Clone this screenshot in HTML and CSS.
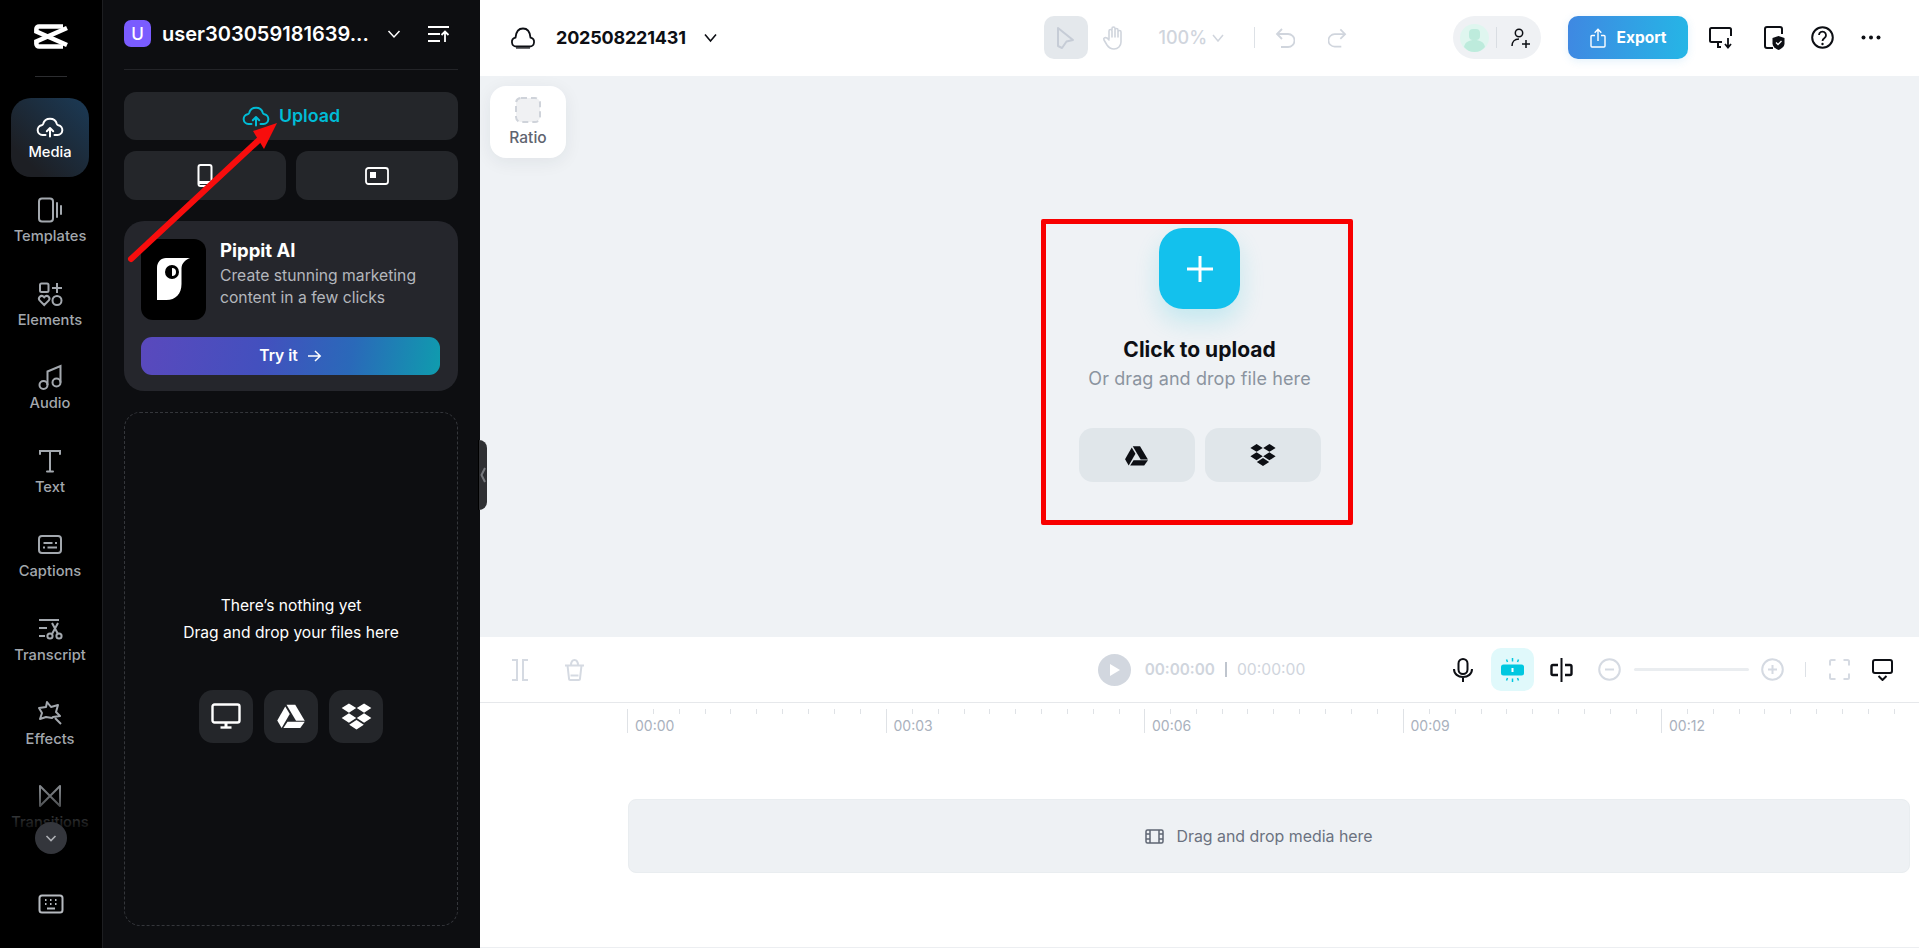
FILE: index.html
```html
<!DOCTYPE html>
<html lang="en">
<head>
    <meta charset="UTF-8">
    <meta name="viewport" content="width=device-width, initial-scale=1.0">
    <title>CapCut editor</title>
    <link rel="stylesheet" href="styles.css">
</head>
<body>

    <svg class="defs" aria-hidden="true">
        <symbol id="drive" viewBox="0 0 24 24">
            <path fill="currentColor" d="M8.4 3h7l7.6 12.8h-7z"/>
            <path fill="currentColor" d="M7.4 4.4 1 15.6l3.5 6L11 10.4z"/>
            <path fill="currentColor" d="M9.2 16.6H23l-3.6 5H5.9z"/>
        </symbol>
        <symbol id="dropbox" viewBox="0 0 24 24">
            <path fill="currentColor" d="M6.500 2.500l5.300 3.400-5.300 3.400-5.300-3.400zM17.500 2.500l5.300 3.400-5.300 3.400-5.300-3.400zM6.500 9.700l5.300 3.400-5.300 3.400-5.300-3.400zM17.500 9.700l5.300 3.400-5.300 3.400-5.300-3.400zM12 14.600l5.300 3.400-5.300 3.500-5.300-3.500z"/>
        </symbol>
        <symbol id="cloud-up" viewBox="0 0 28 24">
            <path fill="none" stroke="currentColor" stroke-width="2" stroke-linecap="round" stroke-linejoin="round" d="M9.500 21H6.400a4.900 4.900 0 0 1-.8-9.700 2 2 0 0 0 1.500-1.300 7.200 7.200 0 0 1 13.800 0 2 2 0 0 0 1.500 1.300 4.900 4.900 0 0 1-.8 9.700h-3.100M14 22.500v-8M10.800 17.200l3.200-3.200 3.200 3.200"/>
        </symbol>
    </svg>

    <div class="app">
        <nav class="rail">
            <div class="rail-logo">
                <svg width="36" height="27" viewBox="0 0 36 27" fill="none" stroke="#fff" stroke-width="4.600">
                    <path d="M30 3.500H6A2.600 2.600 0 0 0 3.400 6v2.500L34 22"/>
                    <path d="M30 23.500H6A2.600 2.600 0 0 1 3.400 21v-2.500L34 5"/>
                </svg>
            </div>
            <div class="rail-items">
                <a class="rail-item active">
                    <svg class="rail-icon" viewBox="0 0 28 24"><use href="#cloud-up"/></svg>
                    <span>Media</span>
                </a>
                <a class="rail-item">
                    <svg class="rail-icon" viewBox="0 0 28 28" fill="none" stroke="currentColor" stroke-width="2"><rect x="3" y="2.500" width="14" height="23" rx="3"/><path d="M21 7v14M25 10v8" stroke-linecap="round"/></svg>
                    <span>Templates</span>
                </a>
                <a class="rail-item">
                    <svg class="rail-icon" viewBox="0 0 28 28" fill="none" stroke="currentColor" stroke-width="2"><rect x="4" y="3.500" width="8.500" height="8.500" rx="1.500"/><path d="M16 8h10M21 3v10"/><path d="M8.200 25 3.600 20.400a2.700 2.700 0 0 1 3.800-3.800l.8.8.8-.8a2.700 2.700 0 0 1 3.800 3.800z"/><circle cx="21" cy="20.500" r="4.500"/></svg>
                    <span>Elements</span>
                </a>
                <a class="rail-item">
                    <svg class="rail-icon" viewBox="0 0 28 28" fill="none" stroke="currentColor" stroke-width="2"><circle cx="7.500" cy="22" r="4"/><circle cx="20.500" cy="19.500" r="4"/><path d="M11.500 22V8.500L24.500 3v16.500"/></svg>
                    <span>Audio</span>
                </a>
                <a class="rail-item">
                    <svg class="rail-icon" viewBox="0 0 28 28" fill="none" stroke="currentColor" stroke-width="2" stroke-linecap="round"><path d="M4 7V4h20v3M14 4v20M11 24.500h6"/></svg>
                    <span>Text</span>
                </a>
                <a class="rail-item">
                    <svg class="rail-icon" viewBox="0 0 28 28" fill="none" stroke="currentColor" stroke-width="2"><rect x="3" y="5" width="22" height="17" rx="3"/><path d="M7.500 12h9M19 12h2M7 16.500h2M11.500 16.500h9.500"/></svg>
                    <span>Captions</span>
                </a>
                <a class="rail-item">
                    <svg class="rail-icon" viewBox="0 0 28 28" fill="none" stroke="currentColor" stroke-width="2"><path d="M3 5h20M3 13h8M3 21h6"/><circle cx="14" cy="21" r="2.600"/><circle cx="23" cy="21" r="2.600"/><path d="M16 8l6 11M22 8l-6 11"/></svg>
                    <span>Transcript</span>
                </a>
                <a class="rail-item">
                    <svg class="rail-icon" viewBox="0 0 28 28" fill="none" stroke="currentColor" stroke-width="2" stroke-linejoin="round"><path d="M11 3l4 5 7-2-2 7 4 4-7 1-1 1-6-1-6 2 2-6-3-5 7-1z"/><path d="M19 19l6 6"/></svg>
                    <span>Effects</span>
                </a>
                <a class="rail-item">
                    <svg class="rail-icon" viewBox="0 0 28 28" fill="none" stroke="currentColor" stroke-width="2" stroke-linejoin="round"><path d="M4 4v20l20-20v20z"/></svg>
                    <span>Transitions</span>
                </a>
            </div>
            <div class="rail-fade"></div>
            <button class="rail-more">
                <svg width="14" height="14" viewBox="0 0 14 14" fill="none" stroke="#aeb0b5" stroke-width="1.600"><path d="M2.500 5l4.500 4.500L11.500 5"/></svg>
            </button>
            <div class="rail-foot">
                <svg width="26" height="20" viewBox="0 0 26 20" fill="none" stroke="#b6babf" stroke-width="2"><rect x="1.500" y="1.500" width="23" height="17" rx="2.500"/><path d="M9 14.500h8"/><path d="M7 6h1.500M12 6h1.500M17 6h1.500M7 10h1.500M12 10h1.500M17 10h1.500" stroke-width="1.800"/></svg>
            </div>
        </nav>

        <aside class="panel">
            <div class="user-row">
                <span class="user-badge">U</span>
                <span class="user-name">user303059181639...</span>
                <svg class="user-chev" width="14" height="14" viewBox="0 0 14 14" fill="none" stroke="#fff" stroke-width="1.500"><path d="M1.500 4l5.500 6 5.500-6"/></svg>
                <svg class="user-sort" width="22" height="18" viewBox="0 0 22 18" fill="none" stroke="#fff" stroke-width="1.800"><path d="M0 2h21M0 9h12M0 16h12"/><path d="M17 17V7M13.500 10l3.500-3.500 3.500 3.500"/></svg>
            </div>

            <button class="upload-btn">
                <svg width="28" height="24" viewBox="0 0 28 24"><use href="#cloud-up"/></svg>
                <span>Upload</span>
            </button>

            <div class="source-row">
                <button class="source-btn">
                    <svg width="16" height="23" viewBox="0 0 16 23" fill="none" stroke="#fff" stroke-width="2"><rect x="1.500" y="1" width="13" height="21" rx="2"/><path d="M1.500 18.500h13" stroke-width="3"/></svg>
                </button>
                <button class="source-btn">
                    <svg width="24" height="18" viewBox="0 0 24 18" fill="none" stroke="#fff" stroke-width="1.800"><rect x="1" y="1" width="22" height="16" rx="2.500"/><rect x="5" y="5" width="6" height="6" fill="#fff" stroke="none"/></svg>
                </button>
            </div>

            <div class="promo">
                <div class="promo-top">
                    <div class="promo-logo">
                        <svg width="33" height="42" viewBox="0 0 33 42">
                            <path fill="#fff" d="M9 0h24c-5 2-8 5-8.500 10v16c0 10-6 16-15 16H0V10C0 4 4 0 9 0z"/>
                            <circle cx="15" cy="14" r="7" fill="#000"/>
                            <path fill="#fff" d="M15 10a4 4 0 0 1 0 8z"/>
                        </svg>
                    </div>
                    <div class="promo-copy">
                        <div class="promo-title">Pippit AI</div>
                        <div class="promo-text">Create stunning marketing<br>content in a few clicks</div>
                    </div>
                </div>
                <button class="promo-btn">Try it
                    <svg width="15" height="14" viewBox="0 0 15 14" fill="none" stroke="#fff" stroke-width="1.500"><path d="M1 7h12M8 2l5.200 5L8 12"/></svg>
                </button>
            </div>

            <div class="dropzone">
                <p class="dropzone-text">There’s nothing yet<br>Drag and drop your files here</p>
                <div class="dropzone-btns">
                    <button class="drop-btn">
                        <svg width="30" height="26" viewBox="0 0 30 26" fill="none" stroke="#fff" stroke-width="2.400"><rect x="1.500" y="1.500" width="27" height="18" rx="2"/><path d="M15 20v4" stroke-width="3"/><path d="M9.500 24.500h11"/></svg>
                    </button>
                    <button class="drop-btn"><svg width="30" height="30"><use href="#drive"/></svg></button>
                    <button class="drop-btn"><svg width="33" height="33"><use href="#dropbox"/></svg></button>
                </div>
            </div>

            <div class="panel-handle">
                <svg width="6" height="16" viewBox="0 0 6 16" fill="none" stroke="#77797d" stroke-width="2"><path d="M5 1 1.500 8 5 15"/></svg>
            </div>
        </aside>

        <main class="main">
            <header class="topbar">
                <div class="top-left">
                    <svg class="cloud-icon" width="26" height="22" viewBox="0 0 26 22" fill="none" stroke="#0d0f14" stroke-width="1.800"><path d="M6.500 19.500a4.500 4.500 0 0 1-1-8.900C6 5 8.500 1.500 13 1.500s7 3.500 7.500 9.100a4.500 4.500 0 0 1-1 8.900z"/><path d="M6 21h14" stroke-width="1.200"/></svg>
                    <span class="doc-title">202508221431</span>
                    <svg width="13" height="10" viewBox="0 0 13 10" fill="none" stroke="#0d0f14" stroke-width="1.600"><path d="M1 1.500l5.500 6.500L12 1.500"/></svg>
                </div>
                <div class="top-center">
                    <span class="tool-tile">
                        <svg width="19" height="24" viewBox="0 0 19 24" fill="none" stroke="#c6ccd6" stroke-width="2" stroke-linejoin="round"><path d="M2 2l15 12-6.500 1.500L6 22l-4-2z"/></svg>
                    </span>
                    <svg class="hand" width="23" height="24" viewBox="0 0 23 24" fill="none" stroke="#d0d5dd" stroke-width="1.600" stroke-linecap="round"><path d="M7 13V5a1.500 1.500 0 0 1 3 0v6M10 4V2.500a1.500 1.500 0 0 1 3 0V11M13 4a1.500 1.500 0 0 1 3 0v7M16 6a1.500 1.500 0 0 1 3 0v10c0 4-3 7-7 7-3 0-5-1-7-4l-3-5c-1-2 1-3 3-2l2 2"/></svg>
                    <span class="zoom-val">100%</span>
                    <svg class="zoom-chev" width="12" height="8" viewBox="0 0 12 8" fill="none" stroke="#d0d5dd" stroke-width="1.500"><path d="M1 1l5 6 5-6"/></svg>
                    <span class="top-sep"></span>
                    <svg class="undo" width="20" height="20" viewBox="0 0 20 20" fill="none" stroke="#d0d5dd" stroke-width="1.800"><path d="M7 1 2 6l5 5"/><path d="M2 6h11a6 6 0 0 1 0 13H6"/></svg>
                    <svg class="redo" width="19" height="20" viewBox="0 0 20 20" fill="none" stroke="#d0d5dd" stroke-width="1.800"><path d="M13 1l5 5-5 5"/><path d="M18 6H7a6 6 0 0 0 0 13h7"/></svg>
                </div>
                <div class="top-right">
                    <div class="share-pill">
                        <svg width="29" height="28" viewBox="0 0 29 28"><ellipse cx="14.500" cy="14" rx="14.500" ry="14" fill="#dff6ef"/><rect x="9" y="5" width="11" height="11" rx="4" fill="#bdebdc"/><path fill="#bdebdc" d="M4 23c1-5 5-7 10.500-7S24 18 25 23c-2.500 3-6 5-10.500 5S6.500 26 4 23z"/></svg>
                        <span class="pill-sep"></span>
                        <svg width="20" height="20" viewBox="0 0 20 20" fill="none" stroke="#0d0f14" stroke-width="1.500"><circle cx="8" cy="5" r="3.700"/><path d="M1 18c0-4 2.500-7 7-7"/><path d="M11 16h8M15 12v8"/></svg>
                    </div>
                    <button class="export-btn">
                        <svg width="16" height="20" viewBox="0 0 16 20" fill="none" stroke="#fff" stroke-width="1.400"><path d="M5 7.500H2a1 1 0 0 0-1 1V18a1 1 0 0 0 1 1h12a1 1 0 0 0 1-1V8.500a1 1 0 0 0-1-1h-3"/><path d="M8 13V1.500M4.700 4.700 8 1.300l3.300 3.400"/></svg>
                        Export
                    </button>
                    <svg class="t-monitor" width="23" height="22" viewBox="0 0 23 22" fill="none" stroke="#0d0f14" stroke-width="2"><path d="M13 15H2.500A1.500 1.500 0 0 1 1 13.500v-11A1.500 1.500 0 0 1 2.500 1h18A1.500 1.500 0 0 1 22 2.500V9"/><path d="M8 20h4M9 15v5"/><path d="M19 11v9M16 17l3 3.500 3-3.500" stroke-width="1.800"/></svg>
                    <svg class="t-shield" width="21" height="24" viewBox="0 0 21 24" fill="none"><path stroke="#0d0f14" stroke-width="2" d="M9 22H3a2 2 0 0 1-2-2V3a2 2 0 0 1 2-2h13a2 2 0 0 1 2 2v5"/><path fill="#0d0f14" d="M14.500 10l6 2v5.500c0 3-2.500 5-6 6.500-3.500-1.500-6-3.500-6-6.500V12z"/><path stroke="#fff" stroke-width="1.300" d="M12 16.500l2 2 3.500-3.500"/></svg>
                    <svg class="t-help" width="23" height="23" viewBox="0 0 23 23" fill="none" stroke="#0d0f14" stroke-width="2"><circle cx="11.500" cy="11.500" r="10.300"/><path d="M8 9a3.500 3.500 0 1 1 5.500 3c-1.300.9-2 1.500-2 3" stroke-width="1.800"/><circle cx="11.500" cy="18" r="1.200" fill="#0d0f14" stroke="none"/></svg>
                    <svg class="t-dots" width="20" height="5" viewBox="0 0 20 5" fill="#0d0f14"><circle cx="2.500" cy="2.500" r="2"/><circle cx="10" cy="2.500" r="2"/><circle cx="17.500" cy="2.500" r="2"/></svg>
                </div>
            </header>

            <section class="canvas">
                <div class="ratio-card">
                    <svg width="26" height="26" viewBox="0 0 26 26" fill="#f0f1f3" stroke="#cfd3da" stroke-width="2" stroke-dasharray="6 4"><rect x="1" y="1" width="24" height="24" rx="5"/></svg>
                    <span>Ratio</span>
                </div>
                <div class="upload-box">
                    <div class="plus-tile">
                        <svg width="28" height="28" viewBox="0 0 28 28" stroke="#fff" stroke-width="3"><path d="M14 1v26M1 14h26"/></svg>
                    </div>
                    <div class="upload-title">Click to upload</div>
                    <div class="upload-sub">Or drag and drop file here</div>
                    <div class="cloud-btns">
                        <button class="cloud-btn"><svg width="25" height="25"><use href="#drive"/></svg></button>
                        <button class="cloud-btn"><svg width="28" height="28"><use href="#dropbox"/></svg></button>
                    </div>
                </div>
            </section>

            <section class="timeline">
                <div class="tl-tools">
                    <div class="tl-left">
                        <svg width="18" height="22" viewBox="0 0 18 22" fill="none" stroke="#d5dae2" stroke-width="2"><path d="M1 1h5v20H1M17 1h-5v20h5"/></svg>
                        <svg class="tl-trash" width="21" height="22" viewBox="0 0 21 22" fill="none" stroke="#d5dae2" stroke-width="2"><path d="M1 6.500h19M3.500 6.500l1.500 13a1.500 1.500 0 0 0 1.500 1.500h8a1.500 1.500 0 0 0 1.500-1.500l1.500-13M7 6.500C7 3 8.500 1 10.500 1s3.500 2 3.500 5.500"/><path d="M6.500 16.500h8"/></svg>
                    </div>
                    <div class="tl-center">
                        <span class="play-btn">
                            <svg width="12" height="14" viewBox="0 0 12 14" fill="#fff"><path d="M1 1l10 6-10 6z"/></svg>
                        </span>
                        <span class="time-now">00:00:00</span>
                        <span class="time-sep"></span>
                        <span class="time-all">00:00:00</span>
                    </div>
                    <div class="tl-right">
                        <svg width="20" height="24" viewBox="0 0 20 24" fill="none" stroke="#0d0f14" stroke-width="2"><rect x="5.500" y="1" width="9" height="15" rx="4.500"/><path d="M1 11c0 5 4 8 9 8s9-3 9-8M10 19v5"/></svg>
                        <span class="snap-tile">
                            <svg width="23" height="24" viewBox="0 0 23 24"><rect x="0" y="6.500" width="23" height="11" rx="2.500" fill="#00c8e0"/><rect x="10.500" y="10" width="2" height="4" fill="#fff"/><path stroke="#00c8e0" stroke-width="1.500" d="M11.500 0v3.500M5.500 1.500l1 2.500M17.500 1.500l-1 2.500M11.500 20.500V24M5.500 22.500l1-2.500M17.500 22.500l-1-2.500"/></svg>
                        </span>
                        <svg class="tb-split" width="23" height="24" viewBox="0 0 23 24" fill="none" stroke="#0d0f14" stroke-width="2"><path d="M11.500 0v24"/><path d="M8 7H3a1.500 1.500 0 0 0-1.500 1.500v7A1.500 1.500 0 0 0 3 17h5M15 7h5a1.500 1.500 0 0 1 1.500 1.500v7A1.500 1.500 0 0 1 20 17h-5" stroke-width="2.400"/></svg>
                        <svg class="tb-minus" width="23" height="23" viewBox="0 0 23 23" fill="none" stroke="#d5dae2" stroke-width="2"><circle cx="11.500" cy="11.500" r="10.300"/><path d="M7 11.500h9"/></svg>
                        <span class="zoom-track"></span>
                        <svg class="tb-plus" width="23" height="23" viewBox="0 0 23 23" fill="none" stroke="#d5dae2" stroke-width="2"><circle cx="11.500" cy="11.500" r="10.300"/><path d="M7 11.500h9M11.500 7v9"/></svg>
                        <span class="tb-sep"></span>
                        <svg class="tb-full" width="21" height="21" viewBox="0 0 21 21" fill="none" stroke="#d5dae2" stroke-width="2"><path d="M1 6.500V2.500A1.500 1.500 0 0 1 2.500 1h4M14.500 1h4A1.500 1.500 0 0 1 20 2.500v4M20 14.500v4a1.500 1.500 0 0 1-1.500 1.500h-4M6.500 20h-4A1.500 1.500 0 0 1 1 18.500v-4"/></svg>
                        <svg class="tb-cap" width="21" height="22" viewBox="0 0 21 22" fill="none" stroke="#0d0f14" stroke-width="2"><rect x="1" y="1" width="19" height="13" rx="2"/><path d="M6.500 17l4 4 4-4"/></svg>
                    </div>
                </div>

                <div class="ruler">
                    <div class="ruler-cell">00:00</div>
                    <div class="ruler-cell">00:03</div>
                    <div class="ruler-cell">00:06</div>
                    <div class="ruler-cell">00:09</div>
                    <div class="ruler-cell">00:12</div>
                </div>

                <div class="track">
                    <svg width="19" height="15" viewBox="0 0 19 15" fill="none" stroke="#5f6673" stroke-width="1.500"><rect x="1" y="1" width="17" height="13" rx="1.500"/><path d="M5 1v13M14 1v13M1 5h4M1 10h4M14 5h4M14 10h4"/></svg>
                    <span>Drag and drop media here</span>
                </div>
            </section>
        </main>
    </div>

    <!-- annotations on top of the screenshot -->
    <div class="mark-box"></div>
    <svg class="mark-arrow" width="1919" height="948" viewBox="0 0 1919 948">
        <path d="M131 259 260 139" stroke="#f80d0d" stroke-width="6" stroke-linecap="round"/>
        <path d="M277 123 253 131 264 149z" fill="#f80d0d"/>
    </svg>

</body>
</html>
```

FILE: styles.css
```css
* { box-sizing: border-box; }
html, body { margin: 0; height: 100%; overflow: hidden; }
body { font-family: "Inter", "Liberation Sans", sans-serif; background: #fff; position: relative; }
button { border: 0; padding: 0; font: inherit; cursor: pointer; }
p { margin: 0; }
.defs { position: absolute; width: 0; height: 0; }

.app { display: flex; height: 948px; }

/* left icon rail */
.rail { position: relative; flex: 0 0 103px; background: #000; border-right: 1px solid #1d1e21; display: flex; flex-direction: column; }
.rail-logo { flex: 0 0 98px; display: flex; justify-content: center; padding-top: 23px; position: relative; }
.rail-logo::after { content: ""; position: absolute; left: 35px; top: 76px; width: 32px; height: 1px; background: #2c2d30; }
.rail-items { flex: 1; min-height: 0; overflow: hidden; display: flex; flex-direction: column; gap: 4.800px; }
.rail-item { flex: 0 0 79px; margin: 0 13px 0 11px; border-radius: 20px; color: #a3a8ae; font-size: 14.700px; line-height: 18px; font-weight: 500; display: flex; flex-direction: column; align-items: center; padding-top: 14px; gap: 3px; white-space: nowrap; }
.rail-item.active { color: #fff; background: linear-gradient(45deg, #1d1f24 20%, #1b3a56 100%); }
.rail-icon { width: 28px; height: 28px; display: block; }
.rail-fade { position: absolute; left: 0; right: 0; top: 775px; height: 85px; background: linear-gradient(to bottom, rgba(0,0,0,0), rgba(0,0,0,.85) 60%, #000 100%); }
.rail-more { position: absolute; left: 35px; top: 822px; width: 32px; height: 32px; border-radius: 50%; background: #34363c; display: flex; align-items: center; justify-content: center; }
.rail-foot { flex: 0 0 88px; display: flex; justify-content: center; padding-top: 34px; }

/* media panel */
.panel { position: relative; z-index: 1; flex: 0 0 377px; background: #0d0e11; padding: 0 22px 0 21px; }
.user-row { height: 70px; border-bottom: 1px solid #232428; display: flex; align-items: center; padding-bottom: 2px; }
.user-badge { width: 27px; height: 27px; border-radius: 7px; background: #7a5cff; color: #fff; font-size: 17px; font-weight: 500; display: flex; align-items: center; justify-content: center; }
.user-name { margin-left: 11px; color: #fff; font-size: 20px; font-weight: 600; width: 208px; white-space: nowrap; }
.user-chev { margin-left: 17px; }
.user-sort { margin-left: 27px; }

.upload-btn { margin-top: 22px; width: 100%; height: 48px; border-radius: 12px; background: #24262a; color: #00bcd6; font-size: 17.800px; font-weight: 600; display: flex; align-items: center; justify-content: center; gap: 9px; padding-bottom: 2px; }
.source-row { margin-top: 11px; display: flex; gap: 10px; }
.source-btn { flex: 1; height: 49px; border-radius: 12px; background: #24262a; display: flex; align-items: center; justify-content: center; }

.promo { margin-top: 21px; height: 170px; border-radius: 20px; background: #25262c; padding: 18px 18px 0 17px; }
.promo-top { display: flex; gap: 14px; }
.promo-logo { width: 65px; height: 81px; border-radius: 12px; background: #000; display: flex; align-items: center; justify-content: center; padding-bottom: 2px; }
.promo-title { color: #fff; font-size: 18.500px; font-weight: 700; line-height: 22px; margin-bottom: 4px; }
.promo-text { color: #b4b7bd; font-size: 15.700px; line-height: 21.500px; }
.promo-btn { margin-top: 17px; width: 100%; height: 38px; border-radius: 11px; background: linear-gradient(100deg, #5a49bd 0%, #4350be 40%, #2a69b9 70%, #0f9cae 100%); color: #fff; font-size: 15.600px; font-weight: 600; display: flex; align-items: center; justify-content: center; gap: 9px; padding-bottom: 1px; }

.dropzone { margin-top: 21px; height: 514px; border: 1px dashed #34363b; border-radius: 16px; display: flex; flex-direction: column; align-items: center; justify-content: center; gap: 44px; padding-bottom: 4px; }
.dropzone-text { color: #fff; font-size: 15.600px; line-height: 27px; text-align: center; }
.dropzone-btns { display: flex; gap: 11px; }
.drop-btn { width: 54px; height: 53px; border-radius: 14px; background: #24262a; color: #fff; display: flex; align-items: center; justify-content: center; }

.panel-handle { position: absolute; right: -7px; top: 440px; width: 9px; height: 70px; background: linear-gradient(to right, #000 0, #000 1px, #2f3033 1px); border-radius: 0 8px 8px 0; display: flex; align-items: center; justify-content: center; }

/* right side */
.main { flex: 1; min-width: 0; display: flex; flex-direction: column; }
.topbar { flex: 0 0 76px; background: #fff; display: grid; grid-template-columns: 1fr auto 1fr; align-items: center; padding-bottom: 1px; }

.top-left { display: flex; align-items: center; padding-left: 30px; }
.doc-title { margin-left: 20px; margin-right: 18px; font-size: 18px; font-weight: 700; color: #0d0f14; letter-spacing: -0.2px; }

.top-center { display: flex; align-items: center; margin-right: 9px; }
.tool-tile { width: 44px; height: 43px; border-radius: 10px; background: #e4e8ec; display: flex; align-items: center; justify-content: center; }
.hand { margin-left: 14px; }
.zoom-val { margin-left: 34px; width: 46px; font-size: 18px; color: #d0d5dd; font-weight: 500; white-space: nowrap; }
.zoom-chev { margin-left: 7px; }
.top-sep { margin-left: 30px; width: 1px; height: 21px; background: #dde1e6; }
.undo { margin-left: 20px; }
.redo { margin-left: 33px; }

.top-right { display: flex; align-items: center; justify-content: flex-end; padding-right: 38px; }
.share-pill { width: 88px; height: 43px; border-radius: 22px; background: #eff1f4; display: flex; align-items: center; padding-left: 7px; }
.pill-sep { margin: 0 14px 0 7px; width: 1px; height: 21px; background: #d9dde2; }
.export-btn { margin-left: 27px; width: 120px; height: 43px; border-radius: 10px; background: linear-gradient(95deg, #3f88e2, #25b6e6); color: #fff; font-size: 15.500px; font-weight: 700; display: flex; align-items: center; justify-content: center; gap: 11px; box-shadow: 0 2px 8px rgba(60,160,230,.15); }
.t-monitor { margin-left: 21px; }
.t-shield { margin-left: 32px; }
.t-help { margin-left: 26px; }
.t-dots { margin-left: 27px; }

.canvas { position: relative; flex: 1; min-height: 0; background: #eff2f5; display: flex; flex-direction: column; align-items: center; padding-top: 152px; }
.ratio-card { position: absolute; left: 10px; top: 10px; width: 76px; height: 72px; border-radius: 16px; background: #fff; box-shadow: 0 4px 18px rgba(30,40,60,.07); display: flex; flex-direction: column; align-items: center; padding-top: 11px; gap: 5px; color: #5f6470; font-size: 15.500px; font-weight: 500; }

.upload-box { display: flex; flex-direction: column; align-items: center; }
.plus-tile { width: 81px; height: 81px; border-radius: 24px; background: #13c1ed; box-shadow: 0 12px 24px rgba(19,193,220,.2); display: flex; align-items: center; justify-content: center; }
.upload-title { margin-top: 27px; font-size: 21px; line-height: 28px; font-weight: 700; color: #0d0f14; }
.upload-sub { margin-top: 3px; font-size: 18px; line-height: 24px; letter-spacing: .1px; color: #8b949f; }
.cloud-btns { margin-top: 37px; display: flex; gap: 10px; }
.cloud-btn { width: 116px; height: 54px; border-radius: 14px; background: #e0e6ea; color: #0d0f14; display: flex; align-items: center; justify-content: center; }

.timeline { flex: 0 0 311px; background: #fff; border-bottom: 1px solid #eceef1; }
.tl-tools { height: 66px; border-bottom: 1px solid #e6e8eb; display: grid; grid-template-columns: 1fr auto 1fr; align-items: center; }
.tl-left { display: flex; align-items: center; padding-left: 31px; }
.tl-trash { margin-left: 35px; }
.tl-center { display: flex; align-items: center; margin-left: 4px; color: #d0d5dd; font-size: 15.700px; }
.play-btn { width: 33px; height: 32px; border-radius: 50%; background: #d2d7df; display: flex; align-items: center; justify-content: center; margin-right: 14px; padding-left: 2px; }
.time-now { font-weight: 600; font-size: 15.300px; }
.time-sep { margin: 0 10px; width: 2px; height: 15px; background: #bfc5ce; }
.tl-right { display: flex; align-items: center; justify-content: flex-end; padding-right: 26px; }
.snap-tile { margin-left: 18px; width: 43px; height: 43px; border-radius: 10px; background: #e0f9fb; display: flex; align-items: center; justify-content: center; }
.tb-split { margin-left: 16px; }
.tb-minus { margin-left: 25px; }
.zoom-track { margin-left: 13px; width: 115px; height: 3px; border-radius: 2px; background: #eaedf0; }
.tb-plus { margin-left: 12px; }
.tb-sep { margin-left: 21px; width: 1px; height: 15px; background: #dde1e6; }
.tb-full { margin-left: 23px; }
.tb-cap { margin-left: 22px; }

.ruler { display: flex; padding: 6px 0 0 147px; }
.ruler-cell { flex: 0 0 258.500px; height: 24px; border-left: 1px solid #dfe2e6; padding: 9px 0 0 7px; font-size: 14px; line-height: 16px; color: #a9b1bd; background-image: repeating-linear-gradient(90deg, transparent 0, transparent 24.850px, #dfe2e6 24.850px, #dfe2e6 25.850px); background-size: 100% 5px; background-repeat: no-repeat; }

.track { margin: 66px 9px 0 148px; height: 74px; border-radius: 8px; border: 1px solid #e9edf0; background: #eef1f4; display: flex; align-items: center; justify-content: center; gap: 12px; padding-right: 20px; color: #6b7280; font-size: 15.900px; }

/* red annotations */
.mark-box { position: absolute; z-index: 2; left: 1041px; top: 219px; width: 312px; height: 306px; border: 5px solid #f80000; border-radius: 2px; }
.mark-arrow { position: absolute; z-index: 2; left: 0; top: 0; pointer-events: none; }
```
